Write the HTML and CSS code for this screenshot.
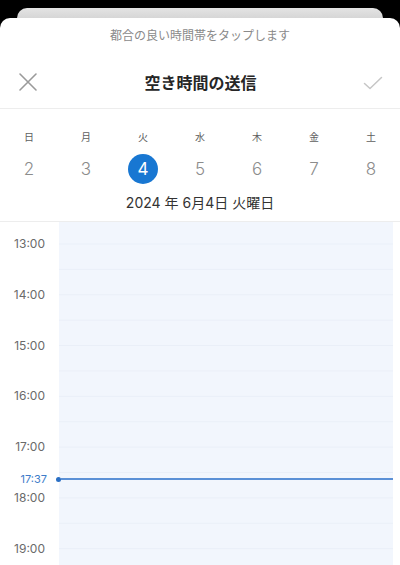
FILE: index.html
```html
<!DOCTYPE html>
<html lang="ja">
<head>
<meta charset="utf-8">
<link rel="stylesheet" href="styles.css">
</head>
<body>
<div class="back-card"></div>
<div class="sheet">
  <div class="hint">都合の良い時間帯をタップします</div>
  <div class="header">
    <svg class="icon-close" width="20" height="20" viewBox="0 0 20 20"><path d="M2 2 L18 18 M18 2 L2 18" stroke="#9a9a9a" stroke-width="1.6" fill="none" stroke-linecap="round"/></svg>
    <div class="title">空き時間の送信</div>
    <svg class="icon-check" width="20" height="14" viewBox="0 0 20 14"><path d="M1.5 7.5 L7 12.5 L18.5 1.5" stroke="#c6c6c6" stroke-width="1.5" fill="none" stroke-linecap="round" stroke-linejoin="round"/></svg>
  </div>
  <div class="week">
    <div class="week-row labels">
      <span>日</span><span>月</span><span>火</span><span>水</span><span>木</span><span>金</span><span>土</span>
    </div>
    <div class="week-row dates">
      <span class="d">2</span><span class="d">3</span><span class="d sel">4</span><span class="d">5</span><span class="d">6</span><span class="d">7</span><span class="d">8</span>
    </div>
    <div class="full-date">2024 年 6月4日 火曜日</div>
  </div>
  <div class="timeline">
    <div class="hours">
      <div class="hour">13:00</div>
      <div class="hour">14:00</div>
      <div class="hour">15:00</div>
      <div class="hour">16:00</div>
      <div class="hour">17:00</div>
      <div class="hour">18:00</div>
      <div class="hour">19:00</div>
    </div>
    <div class="grid"></div>
    <div class="now">
      <span class="now-label">17:37</span>
      <span class="now-dot"></span>
      <span class="now-line"></span>
    </div>
  </div>
</div>
</body>
</html>
```
FILE: styles.css
```css
html, body {
  margin: 0;
  padding: 0;
}
body {
  width: 400px;
  height: 565px;
  overflow: hidden;
  background: #000;
  font-family: Inter, "Noto Sans CJK JP", sans-serif;
  padding-top: 8px;
  box-sizing: border-box;
}
.back-card {
  height: 10px;
  margin: 0 17px;
  background: linear-gradient(#e4e4e4, #d6d6d6);
  border-radius: 10px 10px 0 0;
}
.sheet {
  background: #fff;
  border-radius: 10px 10px 0 0;
  height: 547px;
  overflow: hidden;
}
.hint {
  padding-top: 9px;
  height: 18px;
  line-height: 18px;
  font-size: 12px;
  color: #8a8a8a;
  text-align: center;
}
.header {
  height: 53px;
  padding-top: 10px;
  display: flex;
  align-items: center;
  justify-content: space-between;
  padding-left: 18px;
  padding-right: 17px;
  border-bottom: 1px solid #ededed;
}
.icon-close { display: block; }
.icon-check { display: block; margin-top: 2px; }
.title {
  font-size: 16px;
  font-weight: 700;
  color: #262626;
  margin-top: 1px;
}
.week {
  border-bottom: 1px solid #ededed;
  padding-bottom: 8px;
}
.week-row {
  display: grid;
  grid-template-columns: repeat(7, 1fr);
  justify-items: center;
  padding: 0 0.5px;
}
.labels {
  padding-top: 21px;
  font-size: 10px;
  line-height: 14px;
  color: #5e5e5e;
}
.dates {
  margin-top: 10px;
}
.d {
  width: 30px;
  height: 30px;
  line-height: 30px;
  text-align: center;
  font-size: 17px;
  font-weight: 300;
  color: #8c8c8c;
  border-radius: 50%;
}
.d.sel {
  background: #1877d2;
  color: #fff;
  font-weight: 400;
}
.full-date {
  margin-top: 9px;
  font-size: 14px;
  line-height: 20px;
  color: #333;
  text-align: center;
}
.timeline {
  position: relative;
  display: flex;
  height: 343px;
}
.hours {
  width: 59px;
  padding-top: 12px;
  flex: none;
}
.hour {
  height: 50.8px;
  line-height: 20px;
  font-size: 12px;
  color: #6a6a6a;
  text-align: right;
  padding-right: 14px;
  box-sizing: border-box;
}
.grid {
  flex: 1;
  margin-right: 7px;
  background-color: #f2f6fd;
  background-image: linear-gradient(#eaeff8 0 1px, transparent 1px);
  background-size: 100% 25.4px;
  background-position: 0 21.5px;
}
.now {
  position: absolute;
  left: 0;
  right: 7px;
  top: 250px;
  height: 14px;
  display: flex;
  align-items: center;
}
.now-label {
  width: 47px;
  text-align: right;
  font-size: 11px;
  color: #3d7cc9;
  line-height: 14px;
}
.now-dot {
  width: 5px;
  height: 5px;
  border-radius: 50%;
  background: #2a6fc4;
  margin-left: 9px;
  flex: none;
}
.now-line {
  flex: 1;
  height: 1.5px;
  background: #5b90d6;
}
```
